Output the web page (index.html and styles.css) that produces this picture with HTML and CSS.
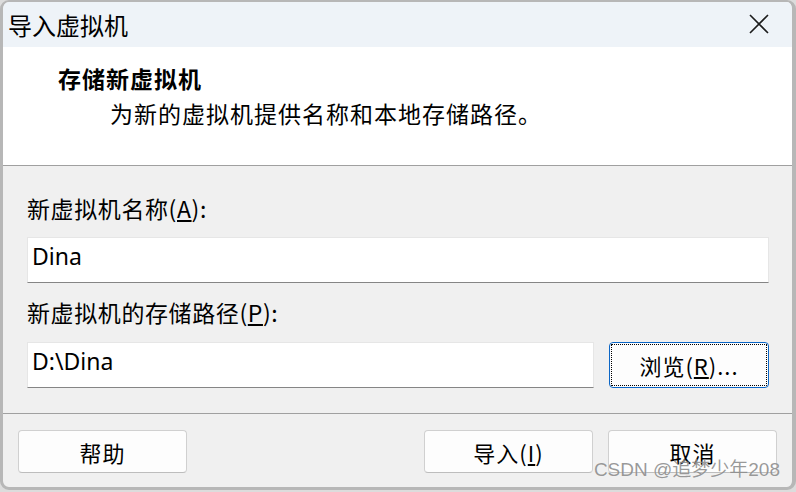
FILE: index.html
```html
<!DOCTYPE html>
<html lang="zh-CN">
<head>
<meta charset="utf-8">
<title>导入虚拟机</title>
<link rel="stylesheet" href="styles.css">
</head>
<body>
<div class="window">
  <div class="titlebar">
    <span class="title">导入虚拟机</span>
    <span class="close">
      <svg width="20" height="20" viewBox="0 0 20 20"><path d="M1 1L19 19M19 1L1 19" stroke="#1c1c1c" stroke-width="1.6" fill="none"/></svg>
    </span>
  </div>
  <div class="header">
    <div class="h-title">存储新虚拟机</div>
    <div class="h-desc">为新的虚拟机提供名称和本地存储路径。</div>
  </div>
  <div class="body">
    <div class="label">新虚拟机名称(<u>A</u>):</div>
    <div class="input">Dina</div>
    <div class="label">新虚拟机的存储路径(<u>P</u>):</div>
    <div class="row">
      <div class="input grow">D:\Dina</div>
      <div class="btn browse">浏览(<u>R</u>)...</div>
    </div>
  </div>
  <div class="footer">
    <div class="btn">帮助</div>
    <div class="spacer"></div>
    <div class="btn">导入(<u>I</u>)</div>
    <div class="btn">取消</div>
  </div>
  <div class="watermark">CSDN @追梦少年208</div>
</div>
</body>
</html>
```
FILE: styles.css
```css
html, body {
  margin: 0;
  padding: 0;
  background: #dcdcdc;
}
body {
  width: 796px;
  height: 492px;
  overflow: hidden;
  font-family: "Noto Sans CJK SC", "Noto Sans", sans-serif;
  color: #000;
}
.window {
  position: relative;
  box-sizing: border-box;
  width: 796px;
  height: 490px;
  border-style: solid;
  border-color: #b7b7b7;
  border-width: 2px 4px 3px 3px;
  border-radius: 9px;
  background: #f0f0f0;
  display: flex;
  flex-direction: column;
  overflow: hidden;
}
.titlebar {
  height: 45px;
  flex: none;
  background: #eef3f8;
  display: flex;
  align-items: center;
  justify-content: space-between;
  padding: 0 23px 0 5px;
}
.title {
  font-size: 24px;
  line-height: 45px;
  margin-top: -1px;
}
.close {
  display: flex;
  width: 20px;
  height: 20px;
  margin-top: -1px;
}
.header {
  box-sizing: border-box;
  height: 119px;
  flex: none;
  background: #fff;
  border-bottom: 1px solid #a0a0a0;
  padding: 16px 0 0 55px;
}
.h-title {
  font-size: 23px;
  font-weight: bold;
  line-height: 30px;
  letter-spacing: 1px;
}
.h-desc {
  font-size: 23px;
  line-height: 30px;
  margin: 5px 0 0 52px;
  letter-spacing: 1px;
}
.body {
  flex: none;
  box-sizing: border-box;
  height: 248px;
  padding: 27px 23px 0 24px;
  border-bottom: 1px solid #a0a0a0;
  display: flex;
  flex-direction: column;
}
.label {
  font-size: 23px;
  line-height: 30px;
  height: 30px;
  margin-bottom: 14px;
  letter-spacing: 0.6px;
}
.input {
  box-sizing: border-box;
  height: 46px;
  background: #fff;
  border: 1px solid #e6e6e6;
  border-bottom-color: #858585;
  padding: 0 0 8px 4px;
  display: flex;
  align-items: center;
  font-family: "Noto Sans", "Liberation Sans", sans-serif;
  font-size: 23px;
  margin-bottom: 14px;
}
.row {
  display: flex;
  gap: 15px;
  margin-top: 1px;
}
.row .input { margin-bottom: 0; }
.grow { flex: 1; }
.btn {
  box-sizing: border-box;
  width: 169px;
  height: 43px;
  background: #fdfdfd;
  border: 1px solid #d0d0d0;
  border-bottom-color: #bdbdbd;
  border-radius: 4px;
  display: flex;
  align-items: center;
  justify-content: center;
  font-size: 22px;
  letter-spacing: 1px;
}
.browse {
  position: relative;
  width: 160px;
  height: 46px;
  border: 1px solid #0b66c6;
}
.browse::after {
  content: "";
  position: absolute;
  inset: 1px;
  border: 1px dotted #000;
  border-radius: 1px;
}
.footer {
  flex: 1;
  display: flex;
  gap: 15px;
  padding: 16px 15px 0 15px;
}
.spacer { flex: 1; }
.watermark {
  position: absolute;
  right: 12px;
  bottom: 6px;
  font-size: 19px;
  line-height: 22px;
  color: rgba(120,120,120,0.75);
  text-shadow: 0 0 1px rgba(255,255,255,0.6);
  font-family: "Liberation Sans", "Noto Sans CJK SC", sans-serif;
}
```
